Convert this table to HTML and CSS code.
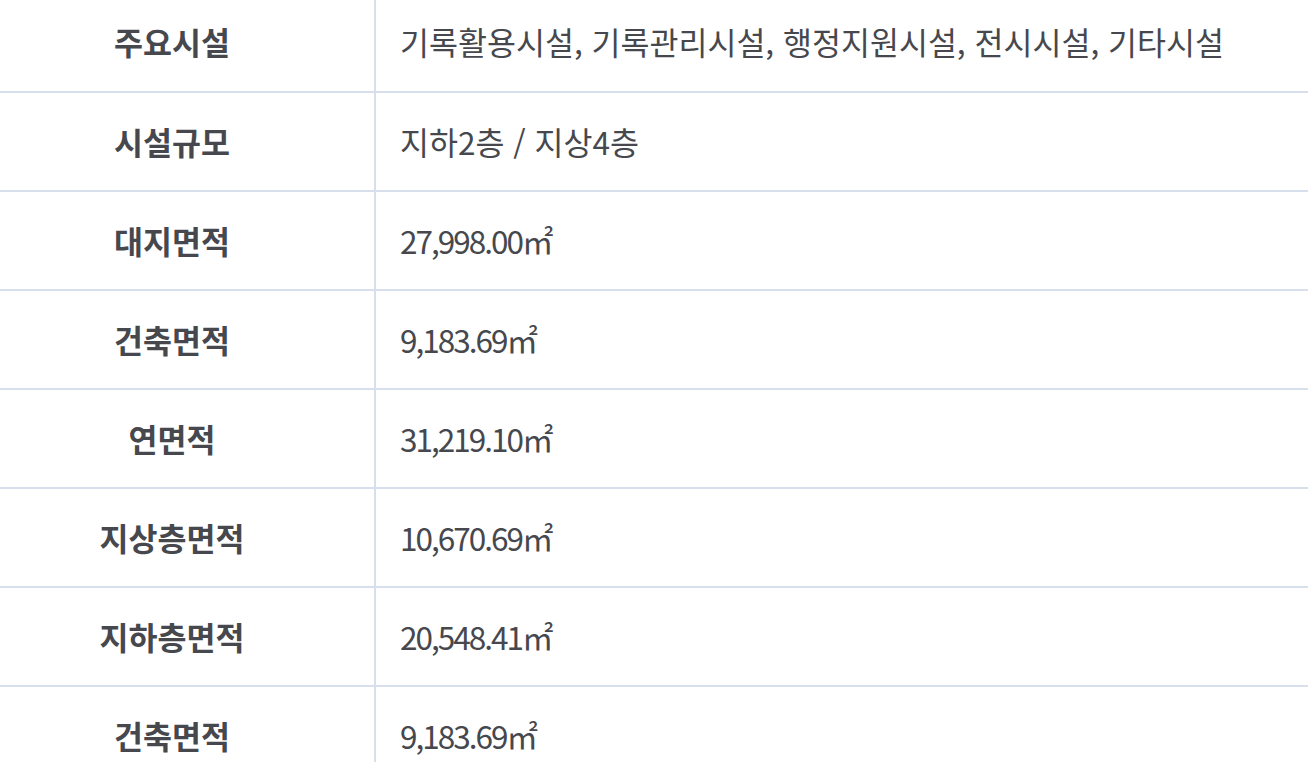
FILE: index.html
```html
<!DOCTYPE html>
<html lang="ko">
<head>
  <meta charset="UTF-8" />
  <title>시설 개요</title>
  <link rel="stylesheet" href="styles.css">
</head>
<body>
  <table class="info-table">
    <tbody>
      <tr><th>주요시설</th><td>기록활용시설, 기록관리시설, 행정지원시설, 전시시설, 기타시설</td></tr>
      <tr><th>시설규모</th><td>지하2층 / 지상4층</td></tr>
      <tr><th>대지면적</th><td class="num">27,998.00㎡</td></tr>
      <tr><th>건축면적</th><td class="num">9,183.69㎡</td></tr>
      <tr><th>연면적</th><td class="num">31,219.10㎡</td></tr>
      <tr><th>지상층면적</th><td class="num">10,670.69㎡</td></tr>
      <tr><th>지하층면적</th><td class="num">20,548.41㎡</td></tr>
      <tr><th>건축면적</th><td class="num">9,183.69㎡</td></tr>
    </tbody>
  </table>
</body>
</html>
```

FILE: styles.css
```css
* {
  box-sizing: border-box;
}

body {
  margin: 0;
  background: #fff;
  font-family: "Noto Sans CJK KR", "Noto Sans", sans-serif;
  overflow: hidden;
}

.info-table {
  width: 100%;
  border-collapse: collapse;
  margin-top: -7px;
}

.info-table tr {
  height: 99px;
}

.info-table th,
.info-table td {
  border-bottom: 2px solid #d6dfeb;
  font-size: 31.5px;
  line-height: 1.2;
  color: #46484e;
  vertical-align: middle;
}

.info-table th {
  width: 375px;
  padding: 0 30px 0 0;
  border-right: 2px solid #d6dfeb;
  font-weight: 700;
  text-align: center;
}

.info-table td {
  padding: 0 0 0 24px;
  font-weight: 400;
  text-align: left;
}

.info-table td.num {
  letter-spacing: -2px;
}
```
